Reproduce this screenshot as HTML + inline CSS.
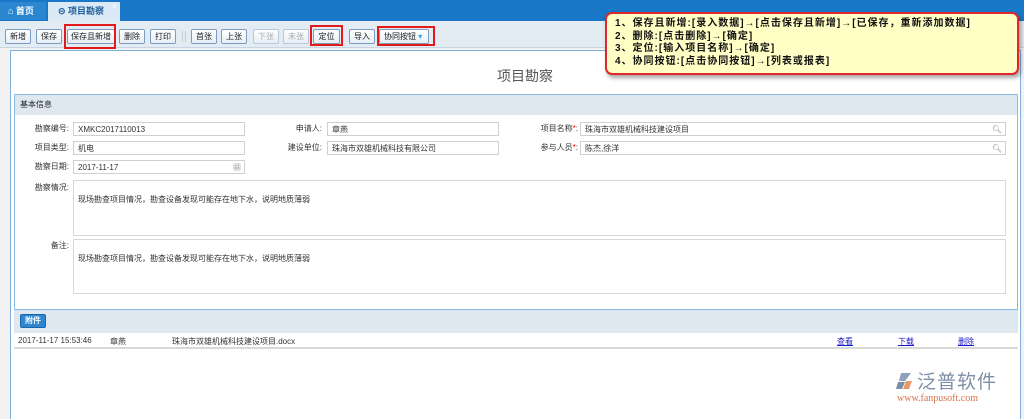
<!DOCTYPE html>
<html><head><meta charset="utf-8"><style>
*{margin:0;padding:0;box-sizing:border-box}
body{width:1024px;height:419px;overflow:hidden;background:#f2f2f2;font-family:"Liberation Sans","Noto Sans CJK SC",sans-serif;font-size:8px;color:#333;position:relative}
.a{position:absolute}
.btn{position:absolute;top:29px;height:15px;border:1px solid #7a9cc0;border-radius:2px;background:linear-gradient(#fff,#e6eef6);font-size:8px;line-height:13px;text-align:center;color:#222}
.dis{color:#aaa;border-color:#b8c8d8}
.red{position:absolute;border:2px solid #e21a1a;}
.lbl{position:absolute;font-size:8px;text-align:right;color:#333;line-height:14px}
.inp{position:absolute;height:14px;border:1px solid #d0d0d0;background:#fff;font-size:8px;line-height:13px;padding-left:4px;color:#333}
.ta{position:absolute;border:1px solid #d8d8d8;background:#fff;font-size:8px;padding:13px 0 0 4px}
.lnk{position:absolute;top:336px;color:#1a1acc;text-decoration:underline;font-size:8px}
</style></head><body>
<div class="a" style="left:0;top:0;width:1024px;height:21px;background:#1877c6"></div>
<div class="a" style="left:0;top:2px;width:46px;height:18px;background:#2a86d0;color:#fff;font-size:9px;line-height:18px;padding-left:8px;font-weight:bold">⌂ 首页</div>
<div class="a" style="left:48px;top:2px;width:72px;height:19px;background:#dbe9f6;color:#1d5d9a;font-size:9px;line-height:18px;padding-left:10px;font-weight:bold">⊝ 项目勘察<span style="position:absolute;right:3px;top:-5px;font-weight:normal;color:#fff">×</span></div>
<div class="a" style="left:0;top:21px;width:1024px;height:27px;background:#e3ebf3;border-bottom:1px solid #c8d6e4"></div>
<div class="btn" style="left:5px;width:26px">新增</div>
<div class="btn" style="left:36px;width:26px">保存</div>
<div class="btn" style="left:67px;width:48px">保存且新增</div>
<div class="btn" style="left:119px;width:26px">删除</div>
<div class="btn" style="left:150px;width:26px">打印</div>
<div class="a" style="left:182px;top:31px;width:4px;height:11px;border-left:1px solid #ccc;border-right:1px solid #ccc"></div>
<div class="btn" style="left:191px;width:26px">首张</div>
<div class="btn" style="left:221px;width:26px">上张</div>
<div class="btn dis" style="left:253px;width:26px">下张</div>
<div class="btn dis" style="left:283px;width:26px">末张</div>
<div class="btn" style="left:313px;width:27px">定位</div>
<div class="btn" style="left:349px;width:26px">导入</div>
<div class="btn" style="left:379px;width:50px;text-align:left;padding-left:4px">协同按钮 <span style="color:#29a3e8">▾</span></div>
<div class="red" style="left:64px;top:24px;width:52px;height:25px"></div>
<div class="red" style="left:310px;top:25px;width:33px;height:21px"></div>
<div class="red" style="left:377px;top:26px;width:58px;height:20px"></div>
<div class="a" style="left:10px;top:50px;width:1011px;height:369px;background:#fff;border:1px solid #7fb0dc;border-bottom:none"></div>
<div class="a" style="left:470px;top:66px;width:110px;text-align:center;font-size:14px;color:#555">项目勘察</div>
<div class="a" style="left:14px;top:94px;width:1004px;height:215px;border:1px solid #8cbbe2;border-bottom:none"></div>
<div class="a" style="left:15px;top:95px;width:1002px;height:20px;background:#dfe8f1;font-size:8px;line-height:20px;padding-left:5px;color:#222">基本信息</div>
<div class="lbl" style="left:14px;top:122px;width:55px">勘察编号:</div>
<div class="inp" style="left:73px;top:122px;width:172px">XMKC2017110013</div>
<div class="lbl" style="left:260px;top:122px;width:62px">申请人:</div>
<div class="inp" style="left:327px;top:122px;width:172px">章燕</div>
<div class="lbl" style="left:510px;top:122px;width:68px">项目名称<span style="color:red">*</span>:</div>
<div class="inp" style="left:580px;top:122px;width:426px">珠海市双雄机械科技建设项目<span style="position:absolute;right:3px;color:#888">🔍︎</span></div>
<div class="lbl" style="left:14px;top:141px;width:55px">项目类型:</div>
<div class="inp" style="left:73px;top:141px;width:172px">机电</div>
<div class="lbl" style="left:260px;top:141px;width:62px">建设单位:</div>
<div class="inp" style="left:327px;top:141px;width:172px">珠海市双雄机械科技有限公司</div>
<div class="lbl" style="left:510px;top:141px;width:68px">参与人员<span style="color:red">*</span>:</div>
<div class="inp" style="left:580px;top:141px;width:426px">陈杰,徐洋<span style="position:absolute;right:3px;color:#888">🔍︎</span></div>
<div class="lbl" style="left:14px;top:160px;width:55px">勘察日期:</div>
<div class="inp" style="left:73px;top:160px;width:172px">2017-11-17<span style="position:absolute;right:3px;color:#777">▦</span></div>
<div class="lbl" style="left:14px;top:181px;width:55px">勘察情况:</div>
<div class="ta" style="left:73px;top:180px;width:933px;height:56px">现场勘查项目情况，勘查设备发现可能存在地下水，说明地质薄弱</div>
<div class="lbl" style="left:14px;top:239px;width:55px">备注:</div>
<div class="ta" style="left:73px;top:239px;width:933px;height:55px">现场勘查项目情况，勘查设备发现可能存在地下水，说明地质薄弱</div>
<div class="a" style="left:14px;top:309px;width:1004px;height:24px;background:#dfe8f1;border-top:1px solid #8cbbe2"></div>
<div class="a" style="left:20px;top:314px;width:26px;height:14px;background:#2f86d0;border:1px solid #1b66a8;border-radius:2px;color:#fff;font-size:8px;line-height:12px;text-align:center;font-weight:bold">附件</div>
<div class="a" style="left:14px;top:333px;width:1004px;height:16px;border-bottom:2px solid #d8d8d8"></div>
<div class="a" style="left:18px;top:336px;font-size:8px">2017-11-17 15:53:46</div>
<div class="a" style="left:110px;top:336px;font-size:8px">章燕</div>
<div class="a" style="left:172px;top:336px;font-size:8px">珠海市双雄机械科技建设项目.docx</div>
<div class="lnk" style="left:837px">查看</div>
<div class="lnk" style="left:898px">下载</div>
<div class="lnk" style="left:958px">删除</div>
<div class="a" style="left:605px;top:12px;width:414px;height:63px;background:#ffffc6;border:2px solid #e0282c;border-radius:7px;box-shadow:2px 3px 4px rgba(0,0,0,.35);padding:4px 0 0 8px;font-size:10px;line-height:12.5px;letter-spacing:1px;font-weight:bold;color:#111;white-space:nowrap">
1、保存且新增:[录入数据]→[点击保存且新增]→[已保存，重新添加数据]<br>2、删除:[点击删除]→[确定]<br>3、定位:[输入项目名称]→[确定]<br>4、协同按钮:[点击协同按钮]→[列表或报表]</div>
<svg class="a" style="left:895px;top:372px" width="20" height="18" viewBox="0 0 20 18"><path d="M6 1h10l-6 8H4z" fill="#8ca0b8"/><path d="M3 10h7l-3 7H1z" fill="#7a8ea8"/><path d="M11 9h6l-3 8H8z" fill="#e89a6a"/></svg>
<div class="a" style="left:917px;top:367px;font-size:19px;color:#7d8fa6;letter-spacing:1px">泛普软件</div>
<div class="a" style="left:897px;top:393px;font-family:'Liberation Serif',serif;font-size:10px;color:#d4744a">www.fanpusoft.com</div>
</body></html>
